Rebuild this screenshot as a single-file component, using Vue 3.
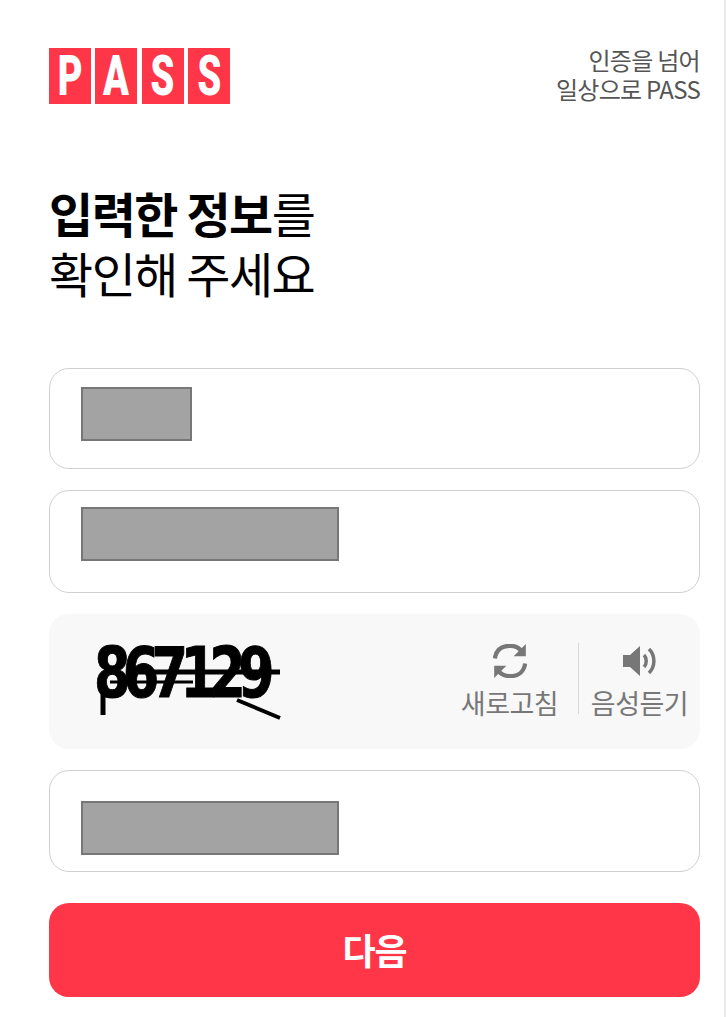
<script setup>
const digits = ['8', '6', '7', '1', '2', '9']
</script>

<template>
  <div class="page">
    <header class="head">
      <div class="logo">
        <span v-for="(c, i) in 'PASS'" :key="i" class="tile"><b>{{ c }}</b></span>
      </div>
      <p class="slogan">인증을 넘어<br />일상으로 PASS</p>
    </header>

    <h1 class="title"><strong>입력한 정보</strong>를<br />확인해 주세요</h1>

    <div class="field f1"><span class="mask short"></span></div>
    <div class="field f2"><span class="mask long"></span></div>

    <div class="captcha">
      <div class="code">
        <span class="digits"><span v-for="d in digits" :key="d">{{ d }}</span></span>
        <svg class="lines" width="200" height="90" viewBox="0 0 200 90">
          <path d="M40 38H185" stroke="#000" stroke-width="5" fill="none" />
          <path d="M15 48H98" stroke="#000" stroke-width="3" fill="none" />
          <path d="M142 66L185 84" stroke="#000" stroke-width="4" fill="none" />
          <path d="M8 56V81" stroke="#000" stroke-width="5" fill="none" />
        </svg>
      </div>
      <div class="tools">
        <div class="tool refresh">
          <svg width="34" height="34" viewBox="3 3 28 28">
            <path d="M4.500 15C5.500 8 10 4.500 17 4.500c4 0 8 2 10 5" fill="none" stroke="#777" stroke-width="3.500" />
            <path d="M30 3v10H20z" fill="#777" />
            <path d="M29.500 19c-1 7-6 10.500-12.500 10.500-4 0-8-2-10-5" fill="none" stroke="#777" stroke-width="3.500" />
            <path d="M4 31V21h10z" fill="#777" />
          </svg>
          <span>새로고침</span>
        </div>
        <div class="tool voice">
          <svg width="38" height="34" viewBox="0 0 38 34">
            <path d="M2 11h7l10-9v30l-10-9H2z" fill="#777" />
            <path d="M23 11c3 3 3 9 0 12" fill="none" stroke="#777" stroke-width="3.500" />
            <path d="M28 5c6.500 6.500 6.500 17.500 0 24" fill="none" stroke="#777" stroke-width="3.500" />
          </svg>
          <span>음성듣기</span>
        </div>
      </div>
    </div>

    <div class="field f3"><span class="mask long"></span></div>

    <button class="next" type="button">다음</button>
  </div>
</template>

<style>
html, body { margin: 0; background: #fff; }
</style>

<style scoped>
.page {
  box-sizing: border-box;
  width: 726px;
  height: 1017px;
  padding: 48px 24px 0 49px;
  border-right: 2px solid #e9e9e9;
  font-family: "Noto Sans CJK KR", "Noto Sans", sans-serif;
  color: #000;
  overflow: hidden;
}
.head {
  display: flex;
  justify-content: space-between;
  align-items: flex-start;
  height: 56px;
}
.logo { display: flex; gap: 4.67px; }
.tile {
  width: 41.75px;
  height: 56px;
  background: #ff3648;
  color: #fff;
  display: flex;
  align-items: center;
  justify-content: center;
}
.tile b {
  display: block;
  font: 900 56px/1 "Roboto", sans-serif;
  transform: scaleX(0.68);
}
.slogan {
  margin: -3px 0 0;
  text-align: right;
  font-size: 24px;
  line-height: 29px;
  letter-spacing: -0.7px;
  color: #555;
}
.title {
  margin: 78px 0 0;
  font-size: 48px;
  line-height: 60px;
  font-weight: 400;
  letter-spacing: -1.5px;
  height: 142px;
}
.title strong { font-weight: 700; }
.field {
  box-sizing: border-box;
  border: 1px solid #d0d0d0;
  border-radius: 20px;
  padding-left: 31px;
  background: #fff;
}
.f1 { height: 101px; margin-top: 44px; padding-top: 18px; }
.f2 { height: 103px; margin-top: 21px; padding-top: 16px; }
.f3 { height: 102px; margin-top: 21px; padding-top: 30px; }
.mask {
  display: block;
  box-sizing: border-box;
  height: 54px;
  background: #a3a3a3;
  border: 2px solid #777;
}
.short { width: 111px; }
.long { width: 258px; }
.captcha {
  margin-top: 21px;
  height: 135px;
  border-radius: 20px;
  background: #f8f8f8;
  display: flex;
  justify-content: space-between;
  position: relative;
}
.code { position: relative; width: 240px; }
.digits {
  position: absolute;
  left: 45px;
  top: 21px;
  display: flex;
  font: 700 70px/1.1 "DejaVu Sans", sans-serif;
  letter-spacing: -10.3px;
  transform: scaleX(0.75);
  transform-origin: left center;
  -webkit-text-stroke: 1px #000;
}
.lines { position: absolute; left: 46px; top: 20px; }
.tools { display: flex; padding-top: 29px; height: 71px; }
.tool {
  display: flex;
  flex-direction: column;
  align-items: center;
  color: #777;
  font-size: 27px;
  line-height: 34px;
  letter-spacing: -0.5px;
  height: 71px;
}
.tool svg { display: block; flex: none; margin: 1px 0 8px; }
.tool span { flex: none; }
.refresh { width: 137px; border-right: 1px solid #d8d8d8; }
.voice { width: 121px; }
.next {
  display: block;
  width: 651px;
  height: 94px;
  margin-top: 31px;
  padding: 0 0 3px;
  border: 0;
  border-radius: 20px;
  background: #ff3648;
  color: #fff;
  font-family: inherit;
  font-size: 36px;
  font-weight: 700;
  letter-spacing: -1px;
}
</style>
